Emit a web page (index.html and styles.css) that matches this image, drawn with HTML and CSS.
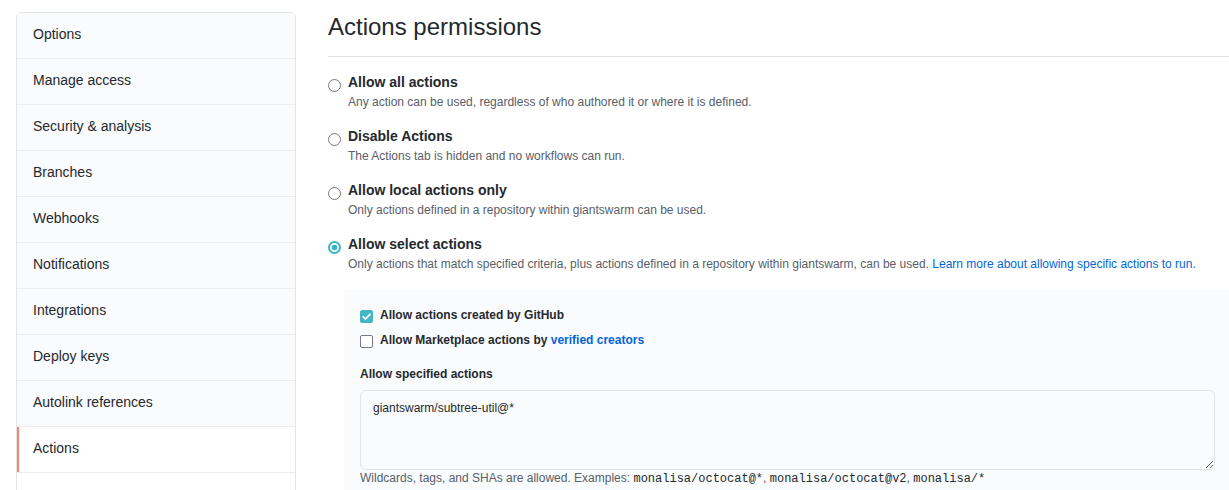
FILE: index.html
```html
<!DOCTYPE html>
<html lang="en">
<head>
<meta charset="utf-8">
<title>Actions permissions</title>
<link rel="stylesheet" href="styles.css">
</head>
<body>
<div class="page">
  <nav class="menu">
    <a class="menu-item">Options</a>
    <a class="menu-item">Manage access</a>
    <a class="menu-item">Security &amp; analysis</a>
    <a class="menu-item">Branches</a>
    <a class="menu-item">Webhooks</a>
    <a class="menu-item">Notifications</a>
    <a class="menu-item">Integrations</a>
    <a class="menu-item">Deploy keys</a>
    <a class="menu-item">Autolink references</a>
    <a class="menu-item selected">Actions</a>
    <a class="menu-item plain">&nbsp;</a>
  </nav>
  <main class="main">
    <div class="subhead">
      <h2 class="subhead-heading">Actions permissions</h2>
    </div>

    <div class="opt">
      <span class="radio"></span>
      <div class="opt-body">
        <div class="opt-title">Allow all actions</div>
        <div class="opt-desc">Any action can be used, regardless of who authored it or where it is defined.</div>
      </div>
    </div>
    <div class="opt">
      <span class="radio"></span>
      <div class="opt-body">
        <div class="opt-title">Disable Actions</div>
        <div class="opt-desc">The Actions tab is hidden and no workflows can run.</div>
      </div>
    </div>
    <div class="opt">
      <span class="radio"></span>
      <div class="opt-body">
        <div class="opt-title">Allow local actions only</div>
        <div class="opt-desc">Only actions defined in a repository within giantswarm can be used.</div>
      </div>
    </div>
    <div class="opt">
      <span class="radio checked"></span>
      <div class="opt-body">
        <div class="opt-title">Allow select actions</div>
        <div class="opt-desc">Only actions that match specified criteria, plus actions defined in a repository within giantswarm, can be used. <a class="link">Learn more about allowing specific actions to run.</a></div>
      </div>
    </div>

    <div class="select-box">
      <div class="chk-row">
        <span class="check checked"><svg width="13" height="13" viewBox="0 0 13 13"><path d="M3.2 6.8 L5.5 9 L9.9 4.3" fill="none" stroke="#fff" stroke-width="1.8" stroke-linecap="round" stroke-linejoin="round"/></svg></span>
        <span>Allow actions created by GitHub</span>
      </div>
      <div class="chk-row">
        <span class="check"></span>
        <span>Allow Marketplace actions by <a class="link">verified creators</a></span>
      </div>
      <div class="field-label">Allow specified actions</div>
      <textarea class="form-control">giantswarm/subtree-util@*</textarea>
      <p class="note">Wildcards, tags, and SHAs are allowed. Examples: <code>monalisa/octocat@*</code>, <code>monalisa/octocat@v2</code>, <code>monalisa/*</code></p>
    </div>
  </main>
</div>
</body>
</html>
```

FILE: styles.css
```css
* { box-sizing: border-box; }

html, body {
  margin: 0;
  padding: 0;
  background: #fff;
  overflow: hidden;
}

body {
  font-family: "Liberation Sans", Arial, sans-serif;
  color: #24292e;
  font-size: 14px;
}

.page {
  display: flex;
  align-items: flex-start;
  gap: 32px;
  padding: 9px 0 0 16px;
  width: 1260px;
}

/* sidebar */
.menu {
  flex: none;
  width: 280px;
  margin-top: 3px;
  border: 1px solid #e1e4e8;
  border-radius: 6px;
  overflow: hidden;
}

.menu-item {
  display: block;
  padding: 11px 16px 13px;
  font-size: 14px;
  line-height: 21px;
  color: #24292e;
  background: #fafbfc;
  border-bottom: 1px solid #eaecef;
}

.menu-item.selected {
  background: #fff;
  box-shadow: inset 2px 0 0 #f9826c;
}

.menu-item.plain {
  background: #fff;
}

/* main */
.main {
  flex: none;
  width: 903px;
}

.subhead {
  border-bottom: 1px solid #e1e4e8;
  padding-bottom: 11px;
  margin-bottom: 15px;
}

.subhead-heading {
  margin: 0;
  font-size: 24px;
  font-weight: 400;
  line-height: 36px;
  color: #24292e;
}

.opt {
  display: flex;
  align-items: flex-start;
  margin-bottom: 15px;
}

.radio {
  flex: none;
  width: 13px;
  height: 13px;
  margin: 7px 7px 0 0;
  border: 1px solid #7b7785;
  border-radius: 50%;
  background: #fff;
}

.radio.checked {
  border: 2px solid #3ab3c3;
  background: radial-gradient(circle, #3ab3c3 0 2.6px, #fff 3.2px);
}

.opt-title {
  font-size: 14px;
  font-weight: 700;
  line-height: 21px;
  color: #24292e;
}

.opt-desc {
  font-size: 12px;
  line-height: 18px;
  color: #586069;
}

.link {
  color: #0366d6;
  text-decoration: none;
}

.select-box {
  margin: 16px 0 0 16px;
  padding: 17px 16px 16px;
  background: #fafbfc;
}

.chk-row {
  display: flex;
  align-items: flex-start;
  font-size: 12px;
  font-weight: 700;
  line-height: 18px;
  color: #24292e;
  margin-bottom: 7px;
}

.check {
  flex: none;
  display: block;
  width: 13px;
  height: 13px;
  margin: 4px 7px 0 0;
  border: 1px solid #7b7785;
  border-radius: 2px;
  background: #fff;
}

.check svg {
  display: block;
  margin: -1px;
}

.check.checked {
  border-color: #45b6c5;
  background: #45b6c5;
}

.field-label {
  margin-top: 16px;
  margin-bottom: 7px;
  font-size: 12px;
  font-weight: 700;
  line-height: 18px;
  color: #24292e;
}

.form-control {
  display: block;
  width: 100%;
  height: 80px;
  margin: 0;
  padding: 7px 12px 5px;
  font-family: "Liberation Sans", Arial, sans-serif;
  font-size: 12px;
  line-height: 20px;
  color: #24292e;
  background: #fafbfc;
  border: 1px solid #e1e4e8;
  border-radius: 6px;
  resize: vertical;
  outline: none;
}

.note {
  margin: 0;
  font-size: 12px;
  line-height: 16px;
  color: #586069;
}

.note code {
  font-family: "Liberation Mono", "Courier New", monospace;
  font-size: 12px;
  line-height: 16px;
  color: #24292e;
}
```
